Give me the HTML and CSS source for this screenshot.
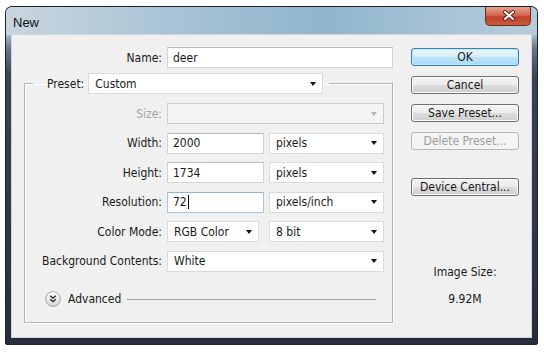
FILE: index.html
```html
<!DOCTYPE html>
<html lang="en">
<head>
    <meta charset="UTF-8">
    <meta name="viewport" content="width=device-width, initial-scale=1.0">
    <title>New</title>
    <link rel="stylesheet" href="styles.css">
</head>
<body>
    <div class="window">
        <!-- Title bar -->
        <div class="titlebar">
            <span class="title">New</span>
            <span class="close">
                <svg width="46" height="19" viewBox="0 0 46 19">
                    <path d="M20 6l8 7M28 6l-8 7" stroke="#5a1a10" stroke-width="4" stroke-linecap="round"/>
                    <path d="M20 6l8 7M28 6l-8 7" stroke="#fff" stroke-width="2.2" stroke-linecap="round"/>
                </svg>
            </span>
        </div>

        <div class="content">
            <div class="main">
                <div class="row name-row">
                    <span class="lbl">Name:</span>
                    <div class="field w-name">deer</div>
                </div>

                <fieldset class="group">
                    <legend class="legend">
                        <span>Preset:</span>
                        <div class="select w-preset">Custom<span class="arrow"></span></div>
                    </legend>

                    <div class="rows">
                        <div class="row">
                            <span class="lbl dim">Size:</span>
                            <div class="select disabled w-full"><span></span><span class="arrow"></span></div>
                        </div>
                        <div class="row">
                            <span class="lbl">Width:</span>
                            <div class="field w-num">2000</div>
                            <div class="select w-unit">pixels<span class="arrow"></span></div>
                        </div>
                        <div class="row">
                            <span class="lbl">Height:</span>
                            <div class="field w-num">1734</div>
                            <div class="select w-unit">pixels<span class="arrow"></span></div>
                        </div>
                        <div class="row">
                            <span class="lbl">Resolution:</span>
                            <div class="field focus w-num">72<span class="caret"></span></div>
                            <div class="select w-unit">pixels/inch<span class="arrow"></span></div>
                        </div>
                        <div class="row">
                            <span class="lbl">Color Mode:</span>
                            <div class="select w-mode">RGB Color<span class="arrow"></span></div>
                            <div class="select w-unit">8 bit<span class="arrow"></span></div>
                        </div>
                        <div class="row">
                            <span class="lbl">Background Contents:</span>
                            <div class="select w-full">White<span class="arrow"></span></div>
                        </div>
                    </div>

                    <div class="advanced">
                        <span class="adv-btn">
                            <svg width="16" height="16" viewBox="0 0 16 16">
                                <defs>
                                    <linearGradient id="advg" x1="0" y1="0" x2="0" y2="1">
                                        <stop offset="0" stop-color="#ffffff"/>
                                        <stop offset="1" stop-color="#d6d6d6"/>
                                    </linearGradient>
                                </defs>
                                <circle cx="8" cy="8" r="7.4" fill="url(#advg)" stroke="#a3a3a3"/>
                                <path d="M5.2 4.8l2.8 2.4 2.8-2.4M5.2 8.3l2.8 2.4 2.8-2.4" fill="none" stroke="#1e1e1e" stroke-width="1.3"/>
                            </svg>
                        </span>
                        <span>Advanced</span>
                        <span class="adv-line"></span>
                    </div>
                </fieldset>
            </div>

            <div class="side">
                <div class="btn default">OK</div>
                <div class="btn">Cancel</div>
                <div class="btn">Save Preset...</div>
                <div class="btn disabled">Delete Preset...</div>
                <div class="btn device">Device Central...</div>
                <div class="img-size">Image Size:</div>
                <div class="img-val">9.92M</div>
            </div>
        </div>
    </div>
</body>
</html>
```

FILE: styles.css
```css
body {
    margin: 0;
    background: #fff;
    font-family: "DejaVu Sans", sans-serif;
    font-stretch: condensed;
    font-size: 12px;
    color: #1a1a1a;
}
.window {
    box-sizing: border-box;
    width: 533px;
    height: 339px;
    margin: 6px 0 0 5px;
    padding: 0 7px 8px 7px;
    display: flex;
    flex-direction: column;
    border-radius: 7px 7px 3px 3px;
    background: linear-gradient(to bottom, #b9cfdd 0, #a7c2d4 28px, #6d7789 42px, #3b4254 70px, #282d3c 100%);
    box-shadow: inset 0 0 0 1px #1d2230;
}
.titlebar {
    height: 28px;
    display: flex;
    align-items: flex-start;
    background: linear-gradient(to right, #c9d6df 0, #a9c4d6 30%, #90b5cc 60%, #a9c5d6 85%, #b7ccd9 100%);
    margin: 1px -6px 0 -6px;
    padding: 0 6px;
    border-radius: 6px 6px 0 0;
}
.title {
    padding: 8px 0 0 1px;
    font-family: "Liberation Sans", sans-serif;
    font-size: 13px;
    color: #111;
}
.close {
    margin: 0 0 0 auto;
    width: 46px;
    height: 19px;
    box-sizing: border-box;
    border: 1px solid #6e2a1c;
    border-top: none;
    border-radius: 0 0 5px 5px;
    background: linear-gradient(to bottom, #e6a08e 0, #d66a52 45%, #c2412a 55%, #c85a3e 100%);
}
.close svg {
    display: block;
    margin: -1px 0 0 -1px;
}
.content {
    flex: 1;
    display: flex;
    padding: 12px 0 0 12px;
    background: #f0f0f0;
    box-shadow: 0 0 0 1px #cdd5de;
}
.main {
    width: 369px;
}
.row {
    display: flex;
    align-items: center;
    height: 21px;
    gap: 5px;
}
.lbl {
    width: 137px;
    text-align: right;
    white-space: nowrap;
}
.name-row .lbl {
    width: 138px;
}
.dim {
    color: #a3a3a3;
}
.field, .select {
    box-sizing: border-box;
    height: 21px;
    display: flex;
    align-items: center;
    background: #fff;
    white-space: nowrap;
}
.field {
    padding-left: 5px;
    border: 1px solid #d3d3d3;
    border-top-color: #b9b9b9;
}
.field.focus {
    border-color: #a9c6e0;
    border-top-color: #8fb3d4;
}
.caret {
    width: 1px;
    height: 14px;
    margin-left: 1px;
    background: #000;
}
.select {
    justify-content: space-between;
    padding: 0 6px 0 6px;
    border: 1px solid #dadada;
}
.select.disabled {
    background: #f4f4f4;
    border-color: #cdcdcd;
}
.arrow {
    width: 0;
    height: 0;
    border-left: 3.5px solid transparent;
    border-right: 3.5px solid transparent;
    border-top: 4px solid #111;
}
.disabled .arrow {
    border-top-color: #b5b5b5;
}
.w-name { width: 226px; }
.w-preset { width: 235px; }
.w-full { width: 217px; }
.w-num { width: 97px; }
.w-unit { width: 115px; }
.w-mode { width: 92px; margin-right: 5px; }

.group {
    margin: 5px 0 0 0;
    padding: 0 7px 15px 0;
    border: 1px solid #b4b4b4;
    box-shadow: 1px 1px 0 #fff, inset 1px 1px 0 #fff;
}
.legend {
    display: flex;
    align-items: center;
    gap: 4px;
    margin-left: 8px;
    padding: 0 6px 0 14px;
}
.rows {
    display: flex;
    flex-direction: column;
    gap: 8.5px;
    margin-top: 9px;
}
.advanced {
    display: flex;
    align-items: center;
    height: 16px;
    margin: 19px 0 0 20px;
}
.adv-btn svg {
    display: block;
}
.adv-btn {
    margin-right: 7px;
}
.adv-line {
    flex: 1;
    height: 1px;
    margin: 1px 9px 0 6px;
    background: #a5a5a5;
}

.side {
    width: 108px;
    margin-left: 18px;
    padding-top: 1px;
    display: flex;
    flex-direction: column;
    gap: 10px;
    text-align: center;
}
.btn {
    box-sizing: border-box;
    height: 18px;
    line-height: 16px;
    border: 1px solid #707070;
    border-radius: 3px;
    background: linear-gradient(to bottom, #f4f4f4 0, #ebebeb 50%, #dddddd 51%, #cfcfcf 100%);
    box-shadow: inset 0 0 0 1px #fbfbfb;
}
.btn.default {
    border-color: #3c7fb1;
    background: linear-gradient(to bottom, #e9f6fd 0, #d6effc 50%, #bce4fa 51%, #a8dbf6 100%);
    box-shadow: inset 0 0 0 1px #b9e6fb;
}
.btn.disabled {
    color: #9c9c9c;
    border-color: #b5b8ba;
    background: #f4f4f4;
    box-shadow: none;
}
.btn.device {
    margin-top: 18px;
}
.img-size {
    margin-top: 59px;
}
.img-val {
    margin-top: 3px;
}
```
